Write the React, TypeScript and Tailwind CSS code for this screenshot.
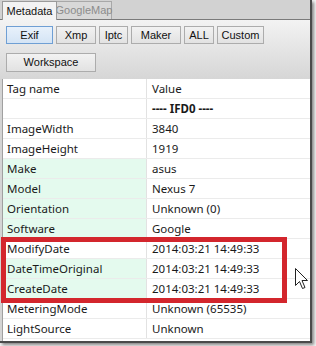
import React from "react";

type Row = { tag: string; value: string; green?: boolean; bold?: boolean };

const rows: Row[] = [
  { tag: "", value: "---- IFD0 ----", bold: true },
  { tag: "ImageWidth", value: "3840" },
  { tag: "ImageHeight", value: "1919" },
  { tag: "Make", value: "asus", green: true },
  { tag: "Model", value: "Nexus 7", green: true },
  { tag: "Orientation", value: "Unknown (0)", green: true },
  { tag: "Software", value: "Google", green: true },
  { tag: "ModifyDate", value: "2014:03:21 14:49:33" },
  { tag: "DateTimeOriginal", value: "2014:03:21 14:49:33", green: true },
  { tag: "CreateDate", value: "2014:03:21 14:49:33", green: true },
  { tag: "MeteringMode", value: "Unknown (65535)" },
  { tag: "LightSource", value: "Unknown" },
];

const buttons = [
  { label: "Exif", w: "w-[47px]", active: true },
  { label: "Xmp", w: "w-[40px]" },
  { label: "Iptc", w: "w-[29px]" },
  { label: "Maker", w: "w-[50px]" },
  { label: "ALL", w: "w-[30px]" },
  { label: "Custom", w: "w-[47px]" },
];

function ToolButton({ label, w, active }: any) {
  return (
    <div
      className={`${w} h-[18px] flex items-center justify-center border text-[11px] text-[#111] ${
        active
          ? "border-[#6f9fd4] bg-gradient-to-b from-[#e8f1fb] to-[#d4e4f5]"
          : "border-[#acacac] bg-gradient-to-b from-[#f2f2f2] to-[#e2e2e2]"
      }`}
    >
      {label}
    </div>
  );
}

function Cursor() {
  return (
    <svg
      className="absolute left-[295px] top-[268px]"
      width="13"
      height="22"
      viewBox="0 0 13 22"
    >
      <path
        d="M0.5 0.5 L0.5 17.5 L4.5 13.5 L7.5 20.5 L10 19.5 L7 12.5 L12.5 12.5 Z"
        fill="white"
        stroke="#222"
        strokeWidth="1"
        strokeLinejoin="round"
      />
    </svg>
  );
}

export default function App() {
  return (
    <div className="w-[316px] h-[346px] bg-[#f4f4f4] relative font-['Liberation_Sans',sans-serif]">
      <div className="w-[312px] h-[343px] bg-[#d4d4d4] border-r-2 border-b-2 border-[#4a4a4a] shadow-[2px_2px_3px_rgba(0,0,0,0.45)] flex flex-col overflow-hidden">
        {/* tabs */}
        <div className="h-[20px] flex items-end pl-[2px] border-b border-[#7a7a7a] bg-[#d2d2d2]">
          <div className="h-[19px] w-[55px] bg-[#f3f3f3] border border-b-0 border-[#9a9a9a] flex items-center justify-center text-[11px] text-[#111] -mb-px relative">
            Metadata
          </div>
          <div className="h-[18px] w-[55px] bg-[#d8d8d8] border border-b-0 border-l-0 border-[#a8a8a8] flex items-center justify-center text-[11px] text-[#8c8c8c]">
            GoogleMap
          </div>
        </div>

        {/* toolbar */}
        <div className="h-[59px] bg-gradient-to-b from-[#f3f3f3] to-[#d6d6d6] flex flex-col pl-[6px] pt-[6px]">
          <div className="flex gap-[3px]">
            {buttons.map((b) => (
              <ToolButton key={b.label} {...b} />
            ))}
          </div>
          <div className="mt-[9px] w-[90px] h-[19px] flex items-center justify-center border border-[#acacac] bg-gradient-to-b from-[#f2f2f2] to-[#e2e2e2] text-[11px] text-[#111]">
            Workspace
          </div>
        </div>

        {/* table */}
        <div className="flex-1 ml-[2px] bg-white border-l border-[#a0a0a0] font-['Noto_Sans',sans-serif] text-[11.5px] text-[#1a1a1a]">
          <div className="h-[20px] flex border-b border-[#ebebeb]">
            <div className="w-[144px] pl-[4px] flex items-center border-r border-[#e2e2e2]">
              Tag name
            </div>
            <div className="flex-1 pl-[5px] flex items-center">Value</div>
          </div>
          {rows.map((r, i) => (
            <div key={i} className="h-[20px] flex border-b border-[#ebebeb]">
              <div
                className={`w-[144px] pl-[4px] flex items-center border-r border-[#e2e2e2] ${
                  r.green ? "bg-[#e4faee]" : ""
                }`}
              >
                {r.tag}
              </div>
              <div
                className={`flex-1 pl-[5px] flex items-center ${
                  r.bold ? "font-bold" : ""
                }`}
              >
                {r.value}
              </div>
            </div>
          ))}
        </div>
      </div>

      {/* highlight box */}
      <div className="absolute left-[1px] top-[237px] w-[286px] h-[66px] border-[5px] border-[#d3262d]" />
      <Cursor />
    </div>
  );
}
